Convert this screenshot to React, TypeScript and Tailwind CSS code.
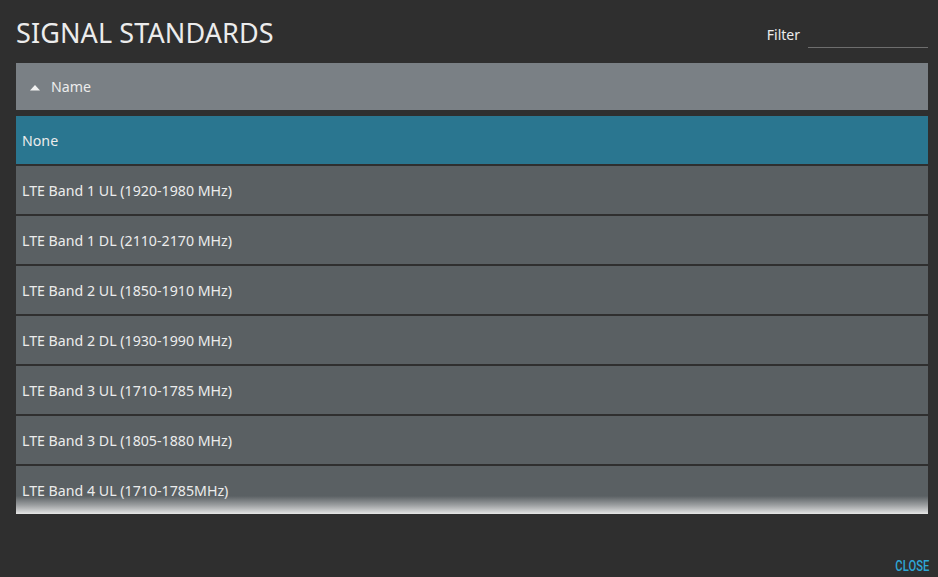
import React from 'react';

const rows = [
  'None',
  'LTE Band 1 UL (1920-1980 MHz)',
  'LTE Band 1 DL (2110-2170 MHz)',
  'LTE Band 2 UL (1850-1910 MHz)',
  'LTE Band 2 DL (1930-1990 MHz)',
  'LTE Band 3 UL (1710-1785 MHz)',
  'LTE Band 3 DL (1805-1880 MHz)',
  'LTE Band 4 UL (1710-1785MHz)',
];

export default function App() {
  return (
    <div
      className="h-[577px] w-[938px] bg-[#2f2f2f] text-[#ececec] flex flex-col pl-4 pr-[10px] overflow-hidden"
      style={{ fontFamily: '"Noto Sans", "Open Sans", sans-serif' }}
    >
      {/* Title + filter */}
      <div className="flex items-end justify-between h-[63px] pb-[10px]">
        <h1 className="text-[27px] leading-none tracking-[0.1px] mb-[7px]">SIGNAL STANDARDS</h1>
        <div className="flex items-end gap-[8px] mb-[5px]">
          <span className="text-[14px] leading-none mb-[6px]">Filter</span>
          <div className="w-[120px] h-[1px] bg-[#6e6e6e]" />
        </div>
      </div>

      {/* Table header */}
      <div className="h-[47px] bg-[#7a8085] flex items-center pl-[13px] pt-[1px] gap-[10px] shrink-0">
        <svg width="12" height="7" viewBox="0 0 12 7">
          <path d="M1 6.5 L6 1 L11 6.5 Z" fill="#f2f2f2" />
        </svg>
        <span className="text-[14.2px]">Name</span>
      </div>

      {/* List */}
      <div className="relative mt-[6px] h-[398px] overflow-hidden shrink-0">
        <div className="flex flex-col gap-[2px]">
          {rows.map((r, i) => (
            <div
              key={r}
              className={
                i === 0
                  ? 'h-[48px] shrink-0 bg-[#2a7690] flex items-center pl-[6px] pt-[2px] text-[14.2px]'
                  : 'h-[48px] shrink-0 bg-[#5a6063] flex items-center pl-[6px] pt-[2px] text-[14.2px]'
              }
            >
              {r}
            </div>
          ))}
        </div>
        <div className="absolute left-0 right-0 bottom-0 h-[18px] bg-gradient-to-b from-[#5a606300] via-[#9a9d9f] to-[#e6e6e6]" />
      </div>

      <div className="flex-1" />
      <div className="flex justify-end pb-[3px]">
        <span
          className="inline-block origin-right scale-x-75 text-[15px] leading-none font-medium text-[#2ea6d6] mr-[-1px]"
          style={{ fontFamily: 'Roboto, "Noto Sans", sans-serif' }}
        >
          CLOSE
        </span>
      </div>
    </div>
  );
}
